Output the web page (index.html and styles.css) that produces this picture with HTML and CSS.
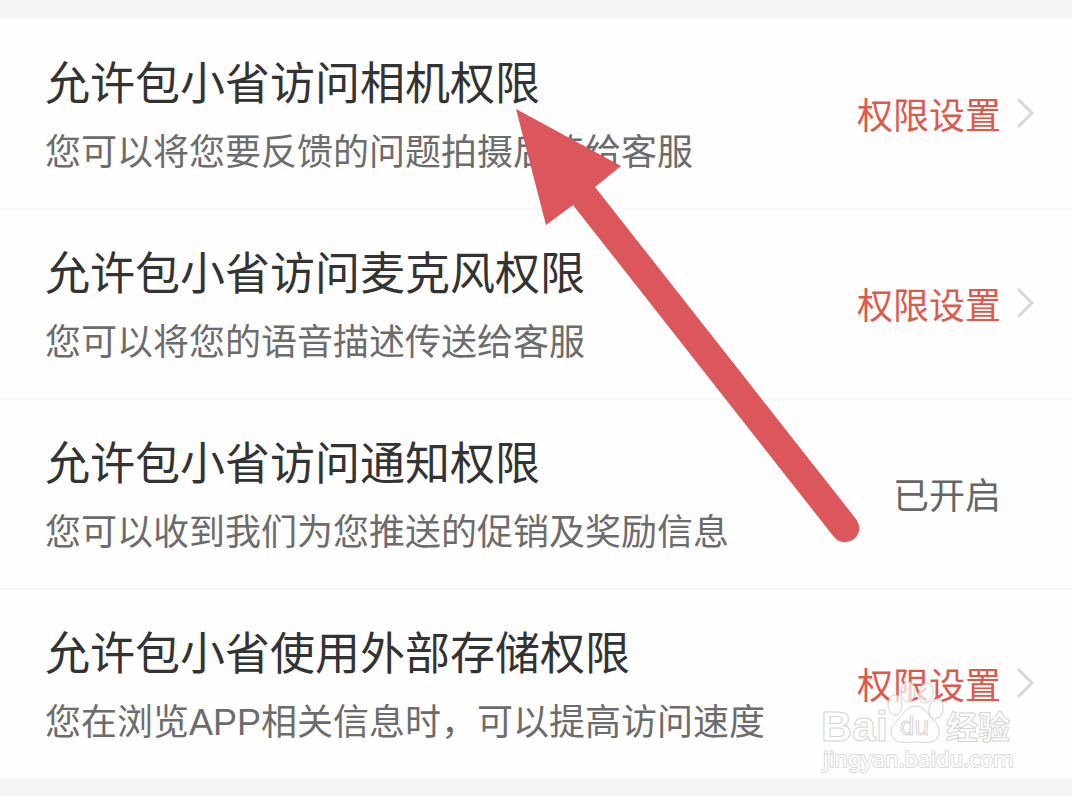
FILE: index.html
```html
<!DOCTYPE html>
<html lang="zh-CN">
<head>
  <meta charset="UTF-8" />
  <meta name="viewport" content="width=device-width, initial-scale=1.0" />
  <title>权限设置</title>
  <link rel="stylesheet" href="styles.css">
</head>
<body>

  <main class="guide">
    <ul class="permissions">
      <li class="row">
        <div class="info">
          <h2>允许包小省访问相机权限</h2>
          <p>您可以将您要反馈的问题拍摄后传给客服</p>
        </div>
        <a class="action" href="#camera">权限设置
          <svg class="chevron" viewBox="0 0 18 32" aria-hidden="true"><path d="M2 2 L16 16 L2 30" /></svg>
        </a>
      </li>
      <li class="row">
        <div class="info">
          <h2>允许包小省访问麦克风权限</h2>
          <p>您可以将您的语音描述传送给客服</p>
        </div>
        <a class="action" href="#microphone">权限设置
          <svg class="chevron" viewBox="0 0 18 32" aria-hidden="true"><path d="M2 2 L16 16 L2 30" /></svg>
        </a>
      </li>
      <li class="row">
        <div class="info">
          <h2>允许包小省访问通知权限</h2>
          <p>您可以收到我们为您推送的促销及奖励信息</p>
        </div>
        <span class="status">已开启</span>
      </li>
      <li class="row">
        <div class="info">
          <h2>允许包小省使用外部存储权限</h2>
          <p>您在浏览APP相关信息时，可以提高访问速度</p>
        </div>
        <a class="action" href="#storage">权限设置
          <svg class="chevron" viewBox="0 0 18 32" aria-hidden="true"><path d="M2 2 L16 16 L2 30" /></svg>
        </a>
      </li>
    </ul>

    <!-- arrow pointing at the camera permission -->
    <svg class="arrow" viewBox="0 0 344 434" aria-hidden="true">
      <path d="M0 0 L105 57 L79 78 L340 410 A14 14 0 0 1 318 428 L57 96 L30 116 Z" />
    </svg>

    <svg class="watermark" viewBox="0 0 200 96" role="img" aria-label="Baidu 经验">
      <g class="paw">
        <ellipse cx="75" cy="19" rx="7" ry="10" />
        <ellipse cx="88" cy="6" rx="7" ry="10" />
        <ellipse cx="106" cy="7" rx="7" ry="10" transform="rotate(12 106 7)" />
        <ellipse cx="116" cy="23" rx="7" ry="10" transform="rotate(12 116 23)" />
        <path d="M95 20 C104 20 107 27 112 33 C118 38 121 43 118 50 C115 59 104 56 95 56 C86 56 76 59 72 50 C69 43 73 38 79 33 C84 27 87 20 95 20 Z" />
      </g>
      <text class="brand" x="1" y="55">Bai</text>
      <text class="du" x="80" y="49">du</text>
      <text class="cn" x="126" y="53">经验</text>
      <text class="site" x="3" y="81">jingyan.baidu.com</text>
    </svg>
  </main>

</body>
</html>
```
FILE: styles.css
```css
body {
  margin: 0;
  font-family: "Noto Sans CJK SC", sans-serif;
  background: #f5f5f5;
}
.guide {
  position: relative;
  padding: 18px 0;
}
.permissions {
  list-style: none;
  margin: 0;
  padding: 0;
  background: #fefefe;
}
.row {
  display: flex;
  align-items: center;
  justify-content: space-between;
  box-sizing: border-box;
  min-height: 190px;
  padding: 28px 38px 30px 45px;
  border-top: 2px solid #f8f8f8;
}
.row:first-child {
  border-top-color: transparent;
}
h2 {
  margin: 0;
  color: #333;
  font-size: 45px;
  font-weight: 400;
  line-height: 66px;
}
p {
  margin: 14px 0 0;
  color: #6c6c6c;
  font-family: "Liberation Sans", "Noto Sans CJK SC", sans-serif;
  font-size: 36px;
  line-height: 50px;
}
.action, .status {
  display: flex;
  align-items: center;
  font-size: 36px;
  line-height: 50px;
  white-space: nowrap;
}
.action {
  gap: 15px;
  color: #dc5a4b;
  text-decoration: none;
}
.status {
  margin-right: 33px;
  color: #666;
}
.chevron {
  width: 18px;
  height: 32px;
  fill: none;
  stroke: #d8d8d8;
  stroke-width: 3;
}
.arrow {
  position: absolute;
  left: 516px;
  top: 109px;
  width: 344px;
  height: 434px;
  fill: #db575c;
}
.watermark {
  position: absolute;
  right: 52px;
  bottom: 14px;
  width: 200px;
  height: 96px;
  overflow: visible;
  fill: #fff;
  stroke: #d4d4d4;
  stroke-width: 1;
  stroke-linejoin: round;
}
.paw {
  fill-opacity: 0.7;
}
.brand {
  font: bold 43px "Liberation Sans", sans-serif;
}
.du {
  font: 26px "Liberation Sans", sans-serif;
}
.cn {
  font: bold 32px "Noto Sans CJK SC", sans-serif;
}
.site {
  font: 22px "Noto Sans", sans-serif;
  stroke: #dadada;
  stroke-width: 2;
  paint-order: stroke;
}
```
